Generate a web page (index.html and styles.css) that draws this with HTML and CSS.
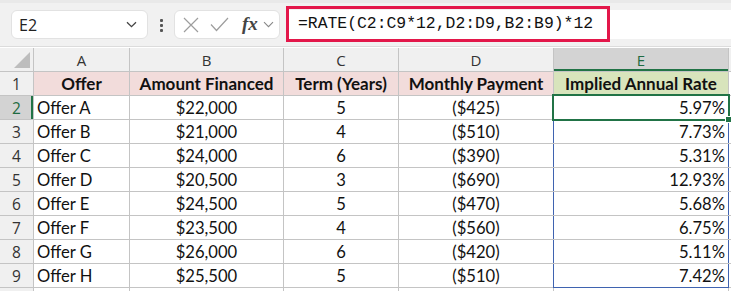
FILE: index.html
```html
<!DOCTYPE html>
<html>
<head>
<meta charset="utf-8">
<link rel="stylesheet" href="styles.css">
</head>
<body>
<div class="app">
  <div class="toolbar">
    <div class="namebox">
      <span class="ref">E2</span>
      <svg class="chev" width="11" height="7" viewBox="0 0 11 7"><path d="M1 1.2 L5.5 5.7 L10 1.2" fill="none" stroke="#444" stroke-width="1.3"/></svg>
    </div>
    <div class="dots"><i></i><i></i><i></i></div>
    <div class="fxbox">
      <svg width="16" height="16" viewBox="0 0 16 16"><path d="M1 1 L15 15 M15 1 L1 15" stroke="#9d9d9d" stroke-width="1.2" fill="none"/></svg>
      <svg width="19" height="15" viewBox="0 0 19 15"><path d="M1 7.5 L6.5 13.5 L18 1" stroke="#9d9d9d" stroke-width="1.2" fill="none"/></svg>
      <span class="fx">fx</span>
      <svg class="chev2" width="11" height="7" viewBox="0 0 11 7"><path d="M1 1.2 L5.5 5.7 L10 1.2" fill="none" stroke="#888" stroke-width="1.1"/></svg>
    </div>
    <div class="formula">
      <div class="hl">=RATE(C2:C9*12,D2:D9,B2:B9)*12</div>
    </div>
  </div>
  <div class="sheet">
    <div class="corner"><span class="tri"></span></div>
    <div class="ch">A</div><div class="ch">B</div><div class="ch">C</div><div class="ch">D</div><div class="ch sel">E</div><div class="ch"></div>

    <div class="rh">1</div>
    <div class="c hd">Offer</div><div class="c hd">Amount Financed</div><div class="c hd">Term (Years)</div><div class="c hd">Monthly Payment</div><div class="c hd g">Implied Annual Rate</div><div class="c"></div>

    <div class="rh sel">2</div>
    <div class="c l">Offer A</div><div class="c m">$22,000</div><div class="c m">5</div><div class="c m">($425)</div><div class="c r active">5.97%</div><div class="c"></div>

    <div class="rh">3</div>
    <div class="c l">Offer B</div><div class="c m">$21,000</div><div class="c m">4</div><div class="c m">($510)</div><div class="c r bl">7.73%</div><div class="c"></div>

    <div class="rh">4</div>
    <div class="c l">Offer C</div><div class="c m">$24,000</div><div class="c m">6</div><div class="c m">($390)</div><div class="c r bl">5.31%</div><div class="c"></div>

    <div class="rh">5</div>
    <div class="c l">Offer D</div><div class="c m">$20,500</div><div class="c m">3</div><div class="c m">($690)</div><div class="c r bl">12.93%</div><div class="c"></div>

    <div class="rh">6</div>
    <div class="c l">Offer E</div><div class="c m">$24,500</div><div class="c m">5</div><div class="c m">($470)</div><div class="c r bl">5.68%</div><div class="c"></div>

    <div class="rh">7</div>
    <div class="c l">Offer F</div><div class="c m">$23,500</div><div class="c m">4</div><div class="c m">($560)</div><div class="c r bl">6.75%</div><div class="c"></div>

    <div class="rh">8</div>
    <div class="c l">Offer G</div><div class="c m">$26,000</div><div class="c m">6</div><div class="c m">($420)</div><div class="c r bl">5.11%</div><div class="c"></div>

    <div class="rh">9</div>
    <div class="c l">Offer H</div><div class="c m">$25,500</div><div class="c m">5</div><div class="c m">($510)</div><div class="c r bl last">7.42%</div><div class="c"></div>

    <div class="rh"></div>
    <div class="c"></div><div class="c"></div><div class="c"></div><div class="c"></div><div class="c"></div><div class="c"></div>
  </div>
</div>
</body>
</html>
```

FILE: styles.css
```css
html, body {
  margin: 0;
  padding: 0;
  background: #ffffff;
}
body {
  width: 731px;
  height: 291px;
  overflow: hidden;
  font-family: "Lato", "Open Sans", sans-serif;
}
.app {
  width: 731px;
}
.toolbar {
  height: 47px;
  background: #f1f1f1;
  border-top: 3px solid #e9e9e9;
  border-bottom: 1px solid #dcdcdc;
  box-sizing: border-box;
  display: flex;
  align-items: flex-start;
  padding-top: 2px;
}
.namebox {
  margin-left: 11px;
  margin-top: 5px;
  width: 137px;
  height: 29px;
  background: #fff;
  border: 1px solid #e2e2e2;
  border-radius: 6px;
  box-sizing: border-box;
  display: flex;
  align-items: center;
  justify-content: space-between;
  padding: 0 10px 0 7px;
}
.ref {
  font-family: "Open Sans", sans-serif;
  font-size: 16px;
  color: #222;
}
.dots {
  width: 26px;
  margin-top: 14px;
  display: flex;
  flex-direction: column;
  align-items: center;
  gap: 2px;
}
.dots i {
  display: block;
  width: 3px;
  height: 3px;
  background: #555;
  border-radius: 1px;
}
.fxbox {
  margin-top: 5px;
  width: 106px;
  height: 29px;
  background: #fff;
  border: 1px solid #e2e2e2;
  border-radius: 6px;
  box-sizing: border-box;
  display: flex;
  align-items: center;
  padding-left: 8px;
  gap: 11px;
}
.fx {
  font-family: "Liberation Serif", serif;
  font-style: italic;
  font-weight: bold;
  font-size: 19px;
  color: #444;
  margin-left: 2px;
  margin-top: -2px;
}
.chev2 {
  margin-left: -6px;
}
.formula {
  margin-left: 7px;
  margin-top: 5px;
  flex: 1;
  height: 29px;
  background: #fff;
  position: relative;
}
.hl {
  position: absolute;
  left: -1px;
  top: -4px;
  width: 324px;
  height: 36px;
  box-sizing: border-box;
  border: 3px solid #e3174a;
  font-family: "Liberation Mono", monospace;
  font-size: 16.4px;
  color: #111;
  padding-left: 9px;
  line-height: 30px;
}
.sheet {
  display: grid;
  grid-template-columns: 33px 95px 153px 114px 154px 174px 1fr;
  grid-template-rows: 23px repeat(9, 23px) 10px;
  gap: 1px;
  background: #c4c4c4;
  margin-top: 1px;
}
.corner {
  background: #f0f0f0;
  position: relative;
}
.tri {
  position: absolute;
  right: 3px;
  bottom: 3px;
  width: 0;
  height: 0;
  border-left: 16px solid transparent;
  border-bottom: 16px solid #bdbdbd;
}
.ch {
  background: #f0f0f0;
  color: #333;
  font-family: "Open Sans", sans-serif;
  font-size: 15px;
  display: flex;
  align-items: center;
  justify-content: center;
}
.ch.sel {
  background: #d3d3d3;
  color: #1e6b41;
  box-shadow: inset 0 -2px 0 #217346;
}
.rh {
  background: #f0f0f0;
  color: #333;
  font-family: "Open Sans", sans-serif;
  font-size: 15.5px;
  display: flex;
  align-items: center;
  justify-content: center;
}
.rh.sel {
  background: #d3d3d3;
  color: #1e6b41;
  box-shadow: inset -2px 0 0 #217346;
}
.c {
  background: #fff;
  font-size: 16.6px;
  color: #111;
  display: flex;
  align-items: center;
  padding: 0 3px;
  white-space: nowrap;
  overflow: visible;
  position: relative;
}
.c.hd {
  background: #f2dcdb;
  font-weight: bold;
  font-size: 17px;
  justify-content: center;
}
.c.hd.g {
  background: #d8e4bc;
}
.c.l { justify-content: flex-start; }
.c.m { justify-content: center; }
.c.r { justify-content: flex-end; }
.c.active {
  outline: 2px solid #217346;
  outline-offset: 0px;
  z-index: 2;
}
.c.active::after {
  content: "";
  position: absolute;
  right: -4px;
  bottom: -4px;
  width: 5px;
  height: 5px;
  background: #217346;
  border: 1px solid #fff;
}
.c.bl {
  box-shadow: -1px 0 0 #3f63b0, 1px 0 0 #3f63b0;
  z-index: 1;
}
.c.bl.last {
  box-shadow: -1px 0 0 #3f63b0, 1px 0 0 #3f63b0, 0 1px 0 #3f63b0, -1px 1px 0 #3f63b0, 1px 1px 0 #3f63b0;
}
```
